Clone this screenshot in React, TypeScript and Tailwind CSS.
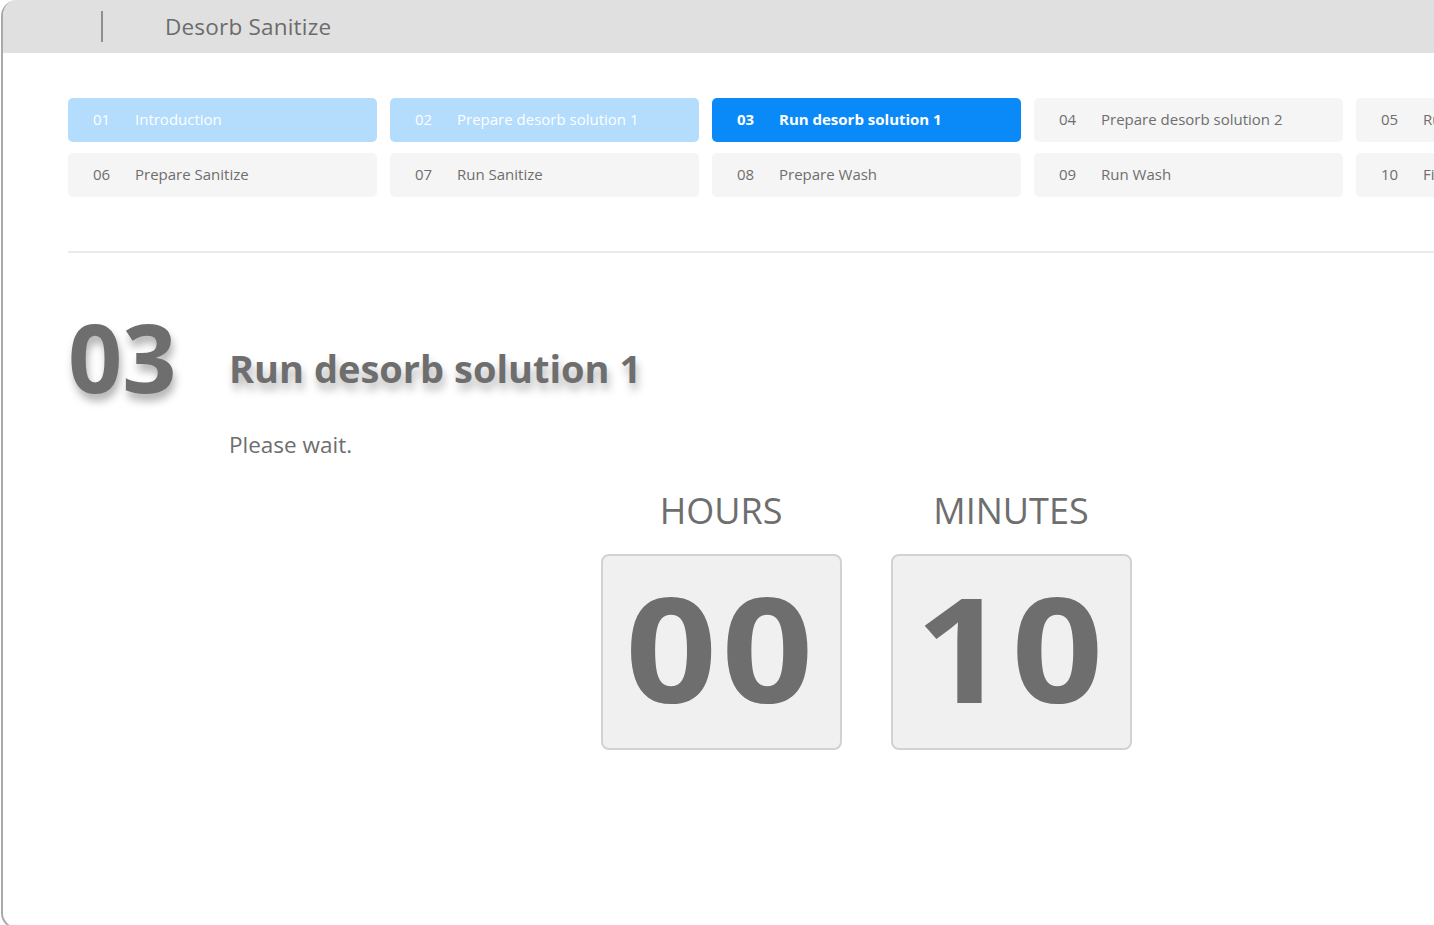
import React from "react";

type Step = { n: string; label: string; state: "done" | "active" | "todo" };

const steps: Step[] = [
  { n: "01", label: "Introduction", state: "done" },
  { n: "02", label: "Prepare desorb solution 1", state: "done" },
  { n: "03", label: "Run desorb solution 1", state: "active" },
  { n: "04", label: "Prepare desorb solution 2", state: "todo" },
  { n: "05", label: "Run desorb solution 2", state: "todo" },
  { n: "06", label: "Prepare Sanitize", state: "todo" },
  { n: "07", label: "Run Sanitize", state: "todo" },
  { n: "08", label: "Prepare Wash", state: "todo" },
  { n: "09", label: "Run Wash", state: "todo" },
  { n: "10", label: "Finish", state: "todo" },
];

function StepButton({ s }: { s: Step }) {
  const cls =
    s.state === "done"
      ? "bg-[#b3dcfd] text-white"
      : s.state === "active"
      ? "bg-[#0a8af8] text-white font-bold"
      : "bg-[#f5f5f5] text-[#6e6e6e]";
  return (
    <div className={`flex h-[44px] items-center overflow-hidden rounded-[5px] pb-[2px] pl-[25px] text-[15px] whitespace-nowrap ${cls}`}>
      <span className="w-[42px]">{s.n}</span>
      <span>{s.label}</span>
    </div>
  );
}

function TimeBox({ label, value }: { label: string; value: string }) {
  return (
    <div className="flex w-[240px] flex-col items-center">
      <div className="text-[36px] leading-none text-[#6e6e6e]">{label}</div>
      <div className="mt-[25px] flex h-[196px] w-[241px] items-center justify-center rounded-[8px] border-2 border-[#d2d2d2] bg-[#f0f0f0]">
        <span className="-mt-[10px] inline-block scale-x-[1.1] text-[146px] font-bold leading-none tracking-[4px] text-[#6e6e6e]">
          {value}
        </span>
      </div>
    </div>
  );
}

export default function App() {
  return (
    <div
      className="h-[925px] w-[1434px] overflow-hidden bg-white"
      style={{ fontFamily: '"Open Sans", "Noto Sans", sans-serif' }}
    >
      <div className="ml-px h-[929px] w-[1700px] overflow-hidden rounded-l-[16px] border-2 border-t-0 border-[#a9a9a9] bg-white">
        <div className="flex h-[53px] items-center bg-[#e0e0e0]">
          <div className="ml-[98px] h-[31px] w-[2px] bg-[#8f8f8f]" />
          <div className="ml-[62px] text-[22.5px] tracking-[0.2px] text-[#6c6c6c]">Desorb Sanitize</div>
        </div>

        <div className="pl-[65px] pt-[45px]">
          <div className="grid grid-cols-[repeat(5,309px)] gap-x-[13px] gap-y-[11px]">
            {steps.map((s) => (
              <StepButton key={s.n} s={s} />
            ))}
          </div>

          <div className="mt-[54px] h-[2px] bg-[#ebebeb]" />

          <div className="mt-[56px] flex items-start">
            <div className="w-[161px] text-[95px] font-bold leading-none text-[#6e6e6e] [text-shadow:2px_7px_8px_rgba(0,0,0,0.3)]">
              03
            </div>
            <div className="mt-[40px] text-[38px] font-bold leading-none text-[#6e6e6e] [text-shadow:2px_7px_8px_rgba(0,0,0,0.28)]">
              Run desorb solution 1
            </div>
          </div>

          <div className="ml-[161px] mt-[24px] text-[22.5px] text-[#6e6e6e]">Please wait.</div>

          <div className="ml-[533px] mt-[31px] flex gap-[50px]">
            <TimeBox label="HOURS" value="00" />
            <TimeBox label="MINUTES" value="10" />
          </div>
        </div>
      </div>
    </div>
  );
}
